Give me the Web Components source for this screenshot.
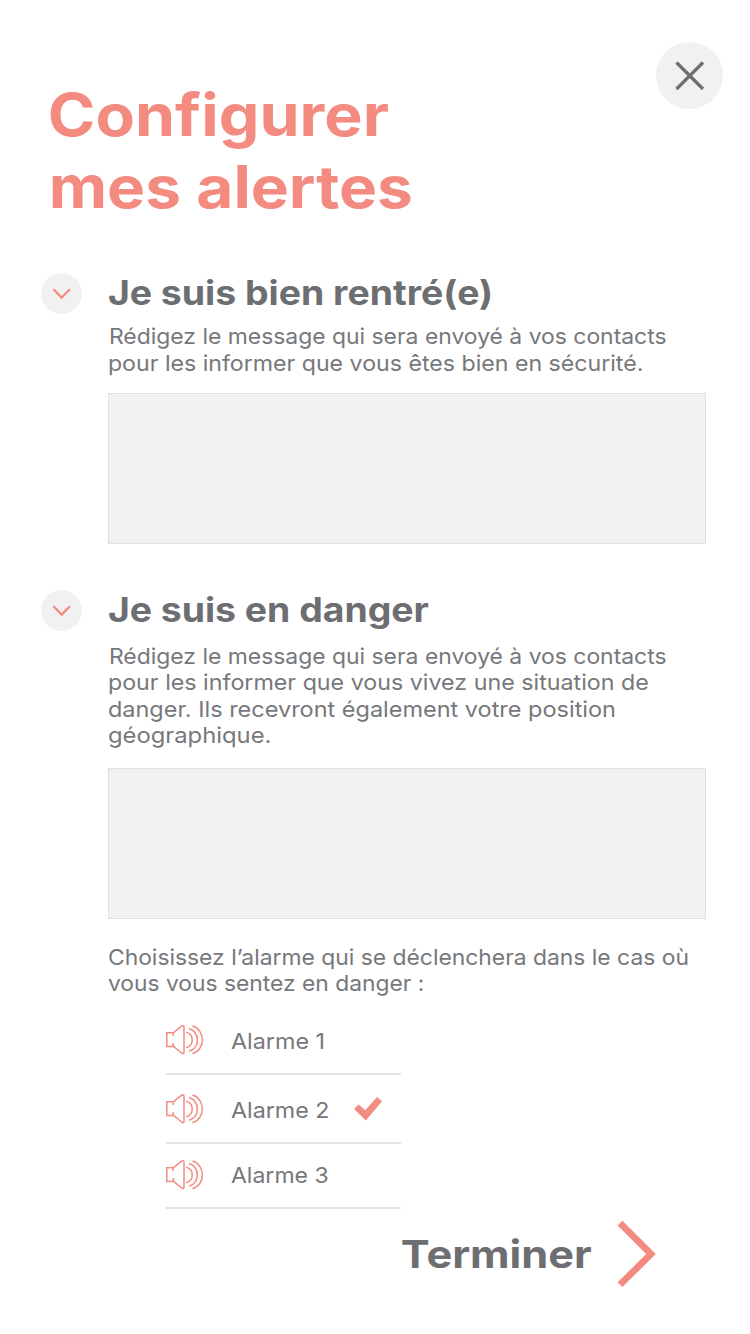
<!DOCTYPE html>
<html lang="fr">
<head>
<meta charset="utf-8">
<title>Configurer mes alertes</title>
<style>
html,body{margin:0;background:#fff}
body{font-family:Inter,"Open Sans",sans-serif;color:#6d6e71}
</style>
</head>
<body>
<alert-page></alert-page>
<script>
const define=(name,html,setup)=>customElements.define(name,class extends HTMLElement{
  connectedCallback(){
    if(this.shadowRoot)return;
    const t=document.createElement('template');
    t.innerHTML=html;
    this.attachShadow({mode:'open'}).append(t.content.cloneNode(true));
    if(setup)setup(this,this.shadowRoot);
  }
});

/* One line of text, stretched so that its ink spans `w` pixels, starting `x` pixels in. */
define('text-line',`<style>
:host{display:block;white-space:nowrap}
span{display:inline-block;transform-origin:0 50%}
</style><span><slot></slot></span>`,(el,root)=>{
  const s=getComputedStyle(el),c=document.createElement('canvas').getContext('2d');
  c.font=`${s.fontWeight} ${s.fontSize} ${s.fontFamily}`;
  const m=c.measureText(el.textContent);
  const k=+el.getAttribute('w')/(m.actualBoundingBoxRight+m.actualBoundingBoxLeft);
  const x=+(el.getAttribute('x')||0)+m.actualBoundingBoxLeft*k;
  root.querySelector('span').style.transform=`translateX(${x}px) scaleX(${k})`;
});

define('close-button',`<style>
:host{display:block;width:67px;height:67px}svg{display:block}
</style><svg width="67" height="67" viewBox="0 0 67 67"><circle cx="33.5" cy="33.5" r="33.5" fill="#f1f1f1"/><path d="M20.5 20.5 47 47M47 20.5 20.5 47" stroke="#6d6e71" stroke-width="3.2" fill="none"/></svg>`);

define('toggle-button',`<style>
:host{display:block;width:41px;height:41px}svg{display:block}
</style><svg width="41" height="41" viewBox="0 0 41 41"><circle cx="20.5" cy="20.5" r="20.5" fill="#f1f1f1"/><path d="M12.5 16.3 20.7 24.5 28.9 16.3" stroke="#f38b81" stroke-width="2.3" fill="none"/></svg>`);

define('message-box',`<style>
:host{display:block;box-sizing:border-box;height:151px;background:#f1f1f1;border:1px solid #e1e1e1}
</style>`);

define('alert-section',`<style>
:host{display:grid;grid-template-columns:41px 598px;column-gap:26px;align-items:start}
.title{font-weight:700;font-size:33.8px;line-height:40px;padding-left:1px}
.body{grid-column:2}
</style><toggle-button></toggle-button><div class="title"><slot name="title"></slot></div><div class="body"><slot></slot></div>`);

define('alarm-row',`<style>
:host{display:flex;align-items:center;box-sizing:border-box;width:235px;border-bottom:2px solid #e3e3e3;font-size:22px;line-height:28px}
.icon{display:block;width:38px;height:30px;margin-right:27px}
.check{display:none;margin:1px 19px 0 auto}
:host([selected]) .check{display:block}
</style>
<svg class="icon" viewBox="0 0 38 30" fill="none" stroke="#f38b81" stroke-width="1.5"><path d="M7.2 7.8H.8V21.5H7.2M7.2 11V7.8L15.6 1.2Q18 .1 18 2.3V27.2Q18 29.5 15.6 28L7.2 21.2V18"/><path d="M20 7.1C28.3 9.4 28.3 20.4 20 22.7"/><path d="M23.2 3.5C34 7.7 34 22.1 23.2 26.3"/><path d="M26.4 1C39.6 4.6 39.6 25.2 26.4 28.8"/></svg>
<slot></slot>
<svg class="check" width="28" height="24" viewBox="0 0 28 24"><path d="M0 11.9 4.7 7.4 11.2 13.3 23 0 28 4.3 11.9 23.5Z" fill="#f38b81"/></svg>`);

define('finish-link',`<style>
:host{display:flex;align-items:center;font-weight:700;font-size:38.4px;line-height:46px}
svg{display:block}
.label{width:215px}
</style><div class="label"><slot></slot></div><svg width="40" height="68" viewBox="0 0 40 68"><path d="M3 3.2 34 34 3 64.7" fill="none" stroke="#f38b81" stroke-width="6.8"/></svg>`);

define('alert-page',`<style>
:host{display:flex;flex-direction:column;box-sizing:border-box;width:750px;height:1334px;padding:42px 0 0 41px;background:#fff}
header{display:flex;justify-content:space-between;align-items:flex-start;height:231px;padding-right:27px}
h1{margin:37px 0 0 9px;font-size:58.5px;font-weight:700;line-height:72px;color:#f38b81}
.p{font-size:21.8px;font-weight:400;line-height:26.4px;padding-left:1px;color:#77787b}
.one{line-height:27px;margin-top:9px}
.two{margin-top:12px}
.three{margin-top:25px}
.first{margin-top:16px}
.second{margin-top:19.4px}
.danger{margin-top:46px}
.list{margin:9px 0 0 125px;font-weight:400;color:#77787b}
.r1{height:69px}.r2{height:69px}.r3{height:65px}
.r1,.r2{padding-top:1px}
.r1 text-line,.r2 text-line{padding-top:2px}
finish-link{margin:11px 0 0 361px}
</style>
<header><h1><text-line w="338">Configurer</text-line><text-line x="2" w="359">mes alertes</text-line></h1><close-button></close-button></header>
<alert-section>
<text-line slot="title" w="381">Je suis bien rentré(e)</text-line>
<div class="p one"><text-line x="1" w="556">Rédigez le message qui sera envoyé à vos contacts</text-line><text-line w="533">pour les informer que vous êtes bien en sécurité.</text-line></div>
<message-box class="first"></message-box>
</alert-section>
<alert-section class="danger">
<text-line slot="title" w="320">Je suis en danger</text-line>
<div class="p two"><text-line x="1" w="556">Rédigez le message qui sera envoyé à vos contacts</text-line><text-line w="539">pour les informer que vous vivez une situation de</text-line><text-line w="506">danger. Ils recevront également votre position</text-line><text-line w="161">géographique.</text-line></div>
<message-box class="second"></message-box>
<div class="p three"><text-line w="579">Choisissez l’alarme qui se déclenchera dans le cas où</text-line><text-line x="-1" w="315">vous vous sentez en danger :</text-line></div>
</alert-section>
<div class="list">
<alarm-row class="r1"><text-line w="92">Alarme 1</text-line></alarm-row>
<alarm-row class="r2" selected><text-line w="97">Alarme 2</text-line></alarm-row>
<alarm-row class="r3"><text-line w="97">Alarme 3</text-line></alarm-row>
</div>
<finish-link><text-line w="189">Terminer</text-line></finish-link>`);
</script>
</body>
</html>
